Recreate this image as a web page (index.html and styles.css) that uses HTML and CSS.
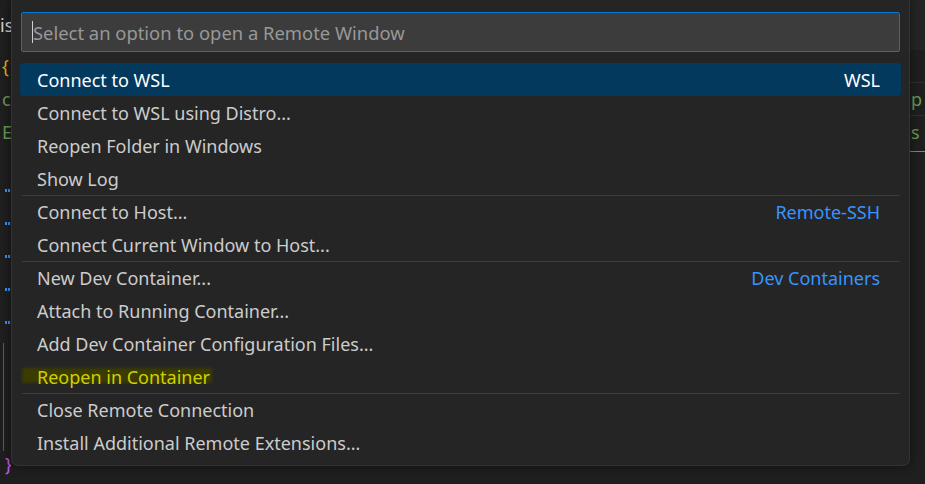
FILE: index.html
```html
<!DOCTYPE html>
<html>
<head>
<meta charset="utf-8">
<link rel="stylesheet" href="styles.css">
</head>
<body>
<div class="editor">
  <div class="gutter-left">
    <div class="ln ln-is">is</div>
    <div class="ln ln-brace">{</div>
    <div class="ln ln-green">c</div>
    <div class="ln ln-green">E</div>
    <div class="ln ln-gap"></div>
    <div class="ln ln-dot"><span class="dots"></span></div>
    <div class="ln ln-dot"><span class="dots"></span></div>
    <div class="ln ln-dot"><span class="dots"></span></div>
    <div class="ln ln-dot"><span class="dots"></span></div>
    <div class="ln ln-dot"><span class="dots"></span></div>
    <div class="guide"></div>
    <div class="ln ln-close">}</div>
  </div>
  <div class="editor-mid"></div>
  <div class="gutter-right">
    <div class="rtop"></div>
    <div class="rline rline-first">p</div>
    <div class="rline rline-s">s</div>
  </div>
</div>

<div class="quick-pick">
  <div class="qp-input">
    <span class="caret"></span><span class="placeholder">Select an option to open a Remote Window</span>
  </div>
  <div class="qp-list">
    <div class="row selected"><span class="label">Connect to WSL</span><span class="detail detail-sel">WSL</span></div>
    <div class="row"><span class="label">Connect to WSL using Distro...</span></div>
    <div class="row"><span class="label">Reopen Folder in Windows</span></div>
    <div class="row"><span class="label">Show Log</span></div>
    <div class="row sep"><span class="label">Connect to Host...</span><span class="detail">Remote-SSH</span></div>
    <div class="row"><span class="label">Connect Current Window to Host...</span></div>
    <div class="row sep"><span class="label">New Dev Container...</span><span class="detail">Dev Containers</span></div>
    <div class="row"><span class="label">Attach to Running Container...</span></div>
    <div class="row"><span class="label">Add Dev Container Configuration Files...</span></div>
    <div class="row"><span class="hl-bg"></span><span class="label hl">Reopen in Container</span></div>
    <div class="row sep"><span class="label">Close Remote Connection</span></div>
    <div class="row"><span class="label">Install Additional Remote Extensions...</span></div>
  </div>
</div>
</body>
</html>
```

FILE: styles.css
```css
html, body {
  margin: 0;
  padding: 0;
  background: #1f1f1f;
  width: 925px;
  height: 484px;
  overflow: hidden;
  font-family: "Noto Sans", "Open Sans", sans-serif;
}

.editor {
  display: flex;
  width: 925px;
  height: 484px;
}

.gutter-left {
  width: 11px;
  display: flex;
  flex-direction: column;
  font-size: 18px;
  overflow: hidden;
}

.ln {
  height: 33px;
  line-height: 33px;
  padding-left: 2px;
  box-sizing: border-box;
  flex: none;
}

.ln-is { color: #d4d4d4; height: 50px; line-height: 50px; padding-left: 0; }
.ln-brace { color: #e0b020; }
.ln-green { color: #6a9955; }
.ln-gap { height: 25px; }
.ln-dot { display: flex; align-items: center; }
.dots {
  display: block;
  width: 5px;
  height: 3px;
  margin-left: 3px;
  background: linear-gradient(90deg, #3794ff 0 2px, transparent 2px 3px, #3794ff 3px 5px);
}
.guide {
  flex: none;
  height: 108px;
  margin-left: 3px;
  width: 1px;
  background: #8a3a8a;
  margin-top: 4px;
}
.ln-close { color: #c060e0; padding-left: 5px; line-height: 26px; height: 30px; }

.editor-mid { flex: 1; }

.gutter-right {
  width: 15px;
  display: flex;
  flex-direction: column;
  font-size: 18px;
}
.rtop { height: 50px; background: #252526; flex: none; }
.rline {
  flex: none;
  height: 32px;
  line-height: 32px;
  color: #6a9955;
  border-top: 1px solid #2e2e2e;
  padding-left: 1px;
}
.rline-first { margin-top: 32px; }
.rline-s { border-bottom: 1px solid #6a9955; height: 35px; }

.quick-pick {
  position: absolute;
  left: 11px;
  top: 0;
  width: 899px;
  height: 466px;
  box-sizing: border-box;
  background: #252526;
  border: 1px solid #333333;
  border-top: none;
  border-radius: 0 0 7px 7px;
  box-shadow: 0 0 8px 2px rgba(0, 0, 0, 0.36);
  padding: 12px 8px 6px 8px;
  display: flex;
  flex-direction: column;
}

.qp-input {
  margin: 0 1px;
  height: 40px;
  box-sizing: border-box;
  border: 1px solid #0078d4;
  border-radius: 2px;
  background: #3c3c3c;
  display: flex;
  align-items: center;
  padding-left: 10px;
  font-size: 18.4px;
}
.caret {
  display: block;
  width: 1px;
  height: 22px;
  background: #d0d0d0;
}
.placeholder { color: #989898; }

.qp-list {
  margin-top: 11px;
  display: flex;
  flex-direction: column;
}

.row {
  height: 33px;
  display: flex;
  align-items: center;
  justify-content: space-between;
  padding: 0 21px 0 17px;
  font-size: 18px;
  color: #cccccc;
  border-radius: 4px;
  position: relative;
}
.row.sep::before {
  content: "";
  position: absolute;
  left: 2px;
  right: 1px;
  top: 0;
  height: 1px;
  background: #3c3c3c;
}
.row.selected {
  background: #04395e;
  color: #ffffff;
}
.detail { color: #3794ff; }
.detail-sel { color: #ffffff; }

.hl {
  color: #d0d000;
  position: relative;
}
.hl-bg {
  position: absolute;
  left: 2px;
  width: 190px;
  top: 8px;
  height: 15px;
  background: #3b3b02;
  filter: blur(1.5px);
}
```
